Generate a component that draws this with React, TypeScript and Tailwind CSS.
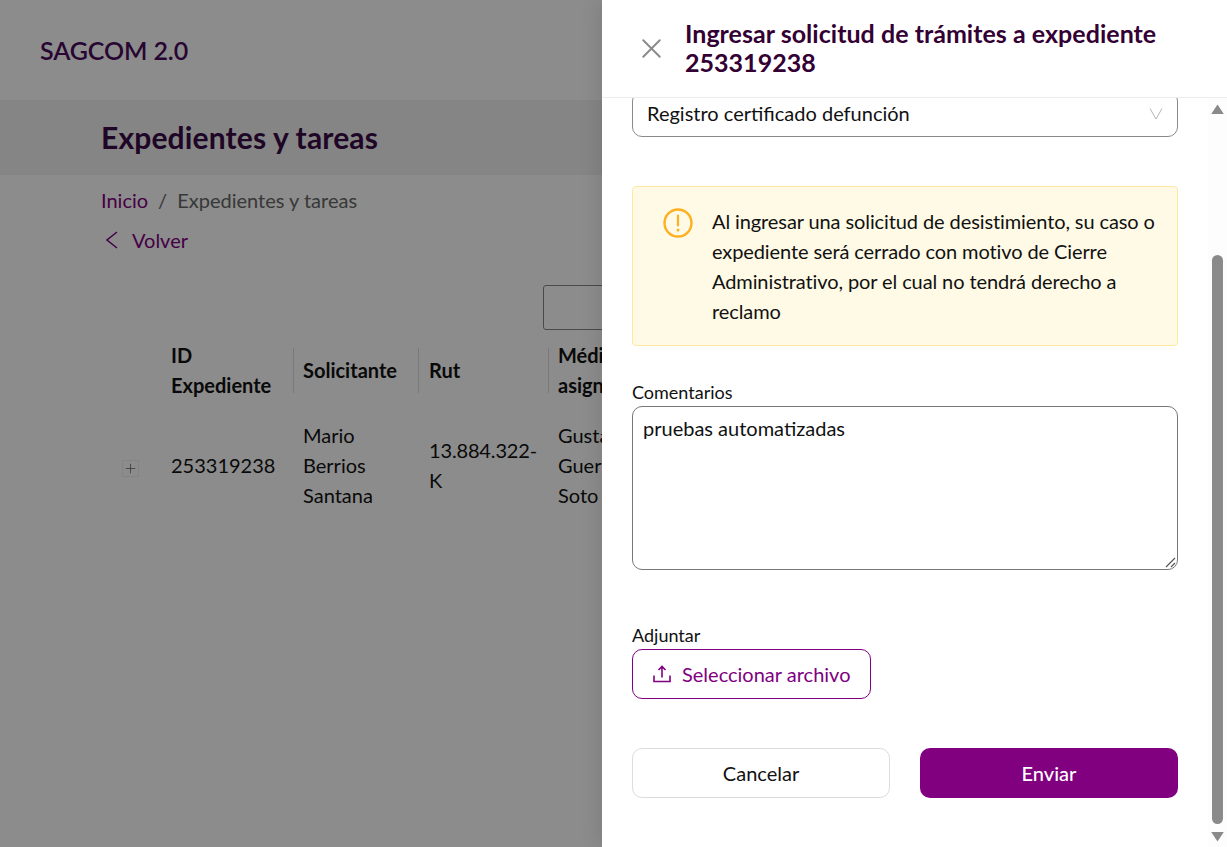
import { Plus, X } from "lucide-react";

const Page = () => {
  return (
    <div className="flex flex-col h-[847px] overflow-hidden bg-white text-[20px] text-[#111]">
      <header className="h-[100px] shrink-0 flex items-center pl-10 pt-[2px]">
        <span className="text-[25px] font-semibold tracking-[-0.1px] text-[#4a0a5c]">SAGCOM 2.0</span>
      </header>
      <div className="h-[75px] shrink-0 flex items-center pl-[101px] pb-[2px] bg-[#f2f2f2]">
        <h1 className="text-[30px] font-bold tracking-[0.15px] leading-[34px] text-[#3a0a45]">Expedientes y tareas</h1>
      </div>
      <div className="pl-[101px] pt-[11px] flex items-center h-[39px]">
        <span className="text-[#800080]">Inicio</span>
        <span className="mx-[10px] text-[#666]">/</span>
        <span className="text-[#666]">Expedientes y tareas</span>
      </div>
      <div className="pl-[104px] pt-[11px] flex items-center gap-[13px] text-[#800080]">
        <svg width="15" height="20" viewBox="0 0 15 20" fill="none">
          <path d="M13 2 3 10l10 8" stroke="currentColor" strokeWidth="1.6" />
        </svg>
        <span>Volver</span>
      </div>
      <div className="mt-[30px] ml-[543px] w-[120px] h-[45px] shrink-0 rounded-[3px] border border-[#888]" />
      <div className="ml-[122px] mt-[10px] grid grid-cols-[49px_122px_125px_130px_80px] leading-[30px]">
        <div />
        <div className="font-bold">ID<br />Expediente</div>
        <div className="relative pl-[10px] flex items-center font-bold">
          Solicitante
          <span className="absolute left-0 top-[8px] bottom-[7px] w-px bg-[#dcdcdc]" />
        </div>
        <div className="relative pl-[11px] flex items-center font-bold">
          Rut
          <span className="absolute left-0 top-[8px] bottom-[7px] w-px bg-[#dcdcdc]" />
        </div>
        <div className="relative pl-[10px] font-bold whitespace-nowrap">
          Médico<br />asignado
          <span className="absolute left-0 top-[8px] bottom-[7px] w-px bg-[#dcdcdc]" />
        </div>

        <div className="pt-[60px]">
          <span className="flex items-center justify-center size-[17px] border border-[#f0f0f0] text-[#444]">
            <Plus size={15} strokeWidth={1} />
          </span>
        </div>
        <div className="mt-[20px] flex items-center">253319238</div>
        <div className="mt-[20px] pl-[10px]">Mario<br />Berrios<br />Santana</div>
        <div className="mt-[20px] pl-[11px] flex items-center tracking-[-0.15px]">13.884.322-<br />K</div>
        <div className="mt-[20px] pl-[10px] whitespace-nowrap">Gustavo<br />Guerrero<br />Soto</div>
      </div>
    </div>
  );
};

const Scrollbar = () => {
  return (
    <div className="w-[19px] shrink-0 flex flex-col items-end pr-[3px] bg-[#fdfdfd]">
      <svg className="mt-[6px] shrink-0" width="13" height="10" viewBox="0 0 13 10">
        <path d="M6.5 0.5 12.8 10H0.2Z" fill="#8a8a8a" />
      </svg>
      <div className="mt-[141px] mr-[1px] w-[11px] h-[569px] shrink-0 rounded-[6px] bg-[#8a8a8a]" />
      <svg className="mt-[8px] shrink-0" width="13" height="10" viewBox="0 0 13 10">
        <path d="M0.2 0H12.8L6.5 9.5Z" fill="#8a8a8a" />
      </svg>
    </div>
  );
};

const Drawer = () => {
  return (
    <aside className="absolute right-0 top-0 h-[847px] w-[625px] flex flex-col bg-white text-[20px] text-[#111] shadow-[-6px_0_16px_rgba(0,0,0,0.08)]">
      <div className="h-[98px] shrink-0 flex items-start border-b border-[#ececec] pl-[33px] pt-[19px]">
        <X className="mt-[13px] text-[#8a8a8a]" size={33} strokeWidth={1.4} />
        <h2 className="ml-[17px] w-[500px] text-[25px] font-bold tracking-[0.03px] leading-[29px] text-[#330033]">
          Ingresar solicitud de trámites a expediente 253319238
        </h2>
      </div>

      <div className="flex-1 min-h-0 flex">
        <div className="flex-1 min-w-0 overflow-hidden px-[30px]">
          <div className="-mt-[7px] h-[46px] flex items-center justify-between pl-[14px] pr-[14px] pb-[2px] rounded-[10px] border border-[#8a8a8a]">
            <span>Registro certificado defunción</span>
            <svg width="14" height="13" viewBox="0 0 14 13" fill="none">
              <path d="M1 1.5 7 12l6-10.5" stroke="#b5b5b5" strokeWidth="1" />
            </svg>
          </div>

          <div className="mt-[49px] h-[160px] flex rounded-[4px] border border-[#ffe9a0] bg-[#fffae5] pl-[30px] pr-[15px] pt-[19px]">
            <svg className="shrink-0 mt-[2px]" width="30" height="30" viewBox="0 0 30 30" fill="none">
              <circle cx="15" cy="15" r="13.5" stroke="#fdb022" strokeWidth="2.4" />
              <path d="M15 7.5V17.5" stroke="#fdb022" strokeWidth="2.2" strokeLinecap="round" />
              <circle cx="15" cy="22" r="1.5" fill="#fdb022" />
            </svg>
            <p className="ml-[19px] leading-[30px] tracking-[-0.1px]">
              Al ingresar una solicitud de desistimiento, su caso o expediente será cerrado con motivo de Cierre Administrativo, por el cual no tendrá derecho a reclamo
            </p>
          </div>

          <label className="block mt-[35px] text-[18px] leading-[22px]">Comentarios</label>
          <div className="relative mt-[3px] h-[164px] rounded-[10px] border border-[#777] px-[10px] pt-[6px] leading-[30px]">
            pruebas automatizadas
            <svg className="absolute right-[1px] bottom-[1px]" width="11" height="11" viewBox="0 0 11 11" fill="none">
              <path d="M10 1 1 10M10 6 6 10" stroke="#555" strokeWidth="1.2" />
            </svg>
          </div>

          <label className="block mt-[54px] text-[18px] leading-[22px]">Adjuntar</label>
          <div className="mt-[3px] w-[239px] h-[50px] flex items-center pl-[20px] pb-[1px] gap-[11px] rounded-[10px] border border-[#800080] text-[#800080]">
            <svg width="18" height="18" viewBox="0 0 18 18" fill="none" stroke="currentColor" strokeWidth="1.6">
              <path d="M1 10.5V16.5H17V10.5" />
              <path d="M9 12.5V2M5.5 5 9 1.5 12.5 5" />
            </svg>
            <span>Seleccionar archivo</span>
          </div>

          <div className="mt-[49px] grid grid-cols-2 gap-[30px]">
            <button className="h-[50px] rounded-[10px] border border-[#dcdcdc] bg-white">Cancelar</button>
            <button className="h-[50px] rounded-[10px] bg-[#800080] font-medium text-white">Enviar</button>
          </div>
        </div>
        <Scrollbar />
      </div>
    </aside>
  );
};

export default function App() {
  return (
    <div className="relative h-[847px] overflow-hidden font-['Lato',sans-serif]">
      <Page />
      <div className="absolute inset-0 bg-black/45" />
      <Drawer />
    </div>
  );
}
